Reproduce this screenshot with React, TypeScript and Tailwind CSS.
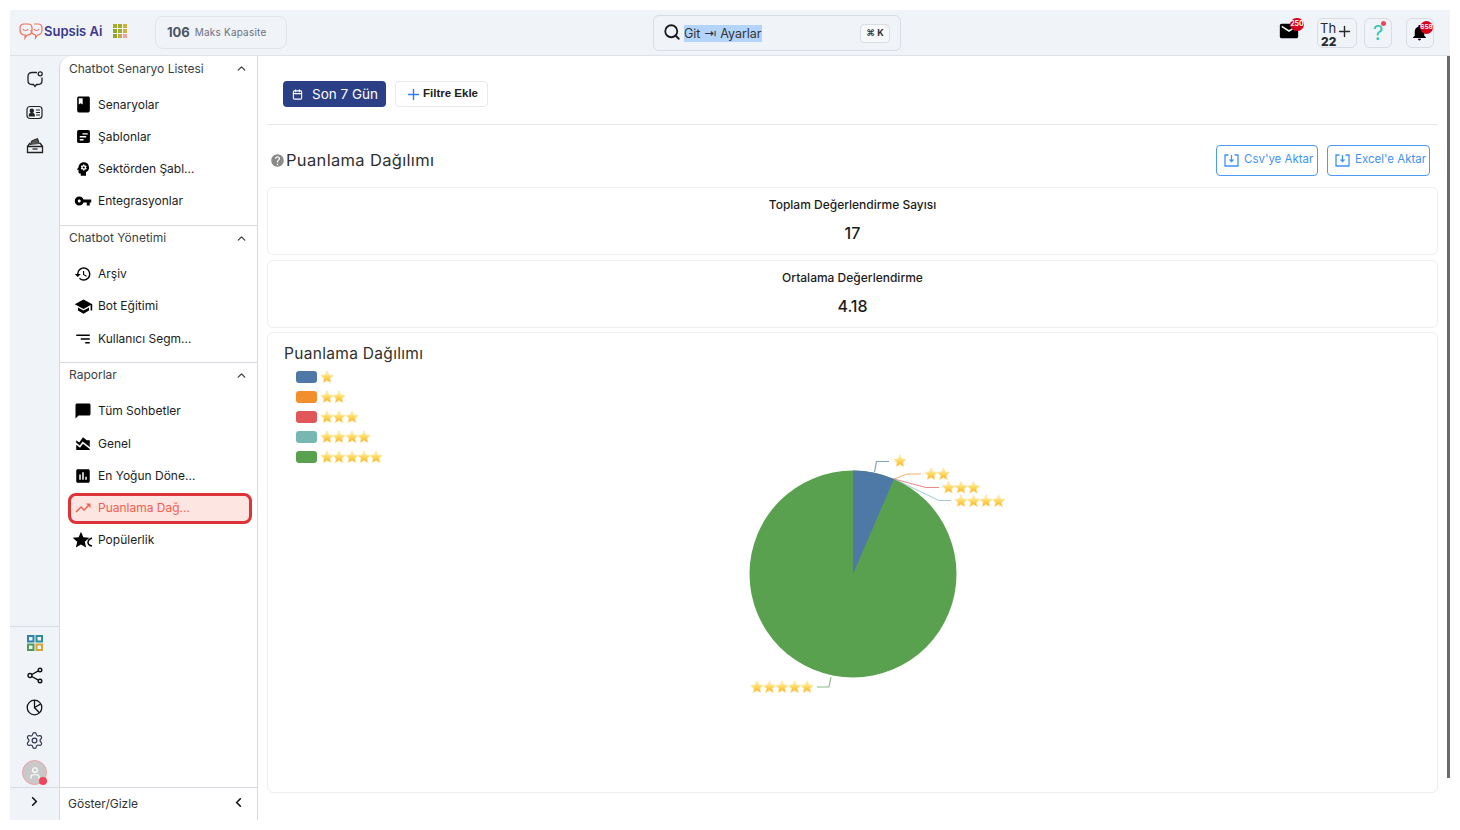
import type { ReactNode } from 'react';
import { ChevronUp, ChevronLeft, ChevronRight, Plus, Search, Settings, User, Calendar } from 'lucide-react';
import {
  MdBook,
  MdPsychology,
  MdVpnKey,
  MdHistory,
  MdSchool,
  MdSort,
  MdChatBubble,
  MdAreaChart,
  MdAssessment,
  MdTrendingUp,
  MdStar,
  MdEmail,
  MdNotifications,
  MdHelp,
} from 'react-icons/md';

const FONT = { fontFamily: 'Inter, "Noto Sans", sans-serif' };
const STAR_PATH = 'M12 1.500l3.200 6.900 7.400.9-5.500 5.100 1.500 7.400L12 18.100l-6.600 3.700 1.500-7.400L1.400 9.300l7.400-.9z';

function TemplateIcon() {
  return (
    <svg width="15" height="15" viewBox="0 0 14 14">
      <rect x="1" y="1" width="12" height="12" rx="1.500" fill="#000" />
      <path d="M6 4.500h5M3.500 7.200h6M3.500 10h3.500" stroke="#fff" strokeWidth="1.300" />
    </svg>
  );
}

function PopularIcon() {
  return (
    <span className="relative flex h-[18px] w-[18px] items-center justify-center">
      <MdStar size={20} className="-ml-1" />
      <svg className="absolute right-[-1px] bottom-[2px]" width="6" height="10" viewBox="0 0 6 10">
        <path d="M5 1C2 2 1 4 1 5.500S2 8.500 5 9" fill="none" stroke="#000" strokeWidth="1.500" />
      </svg>
    </span>
  );
}

function ChatDotIcon() {
  return (
    <svg width="18" height="18" viewBox="0 0 18 18" fill="none" stroke="#222" strokeWidth="1.300">
      <path d="M11 2.500H6C3.500 2.500 2 4 2 6.500v4C2 13 3.500 14.500 6 14.500h1.500L9 16.500l1.500-2H12c2.500 0 4-1.500 4-4V7.500" />
      <circle cx="14.200" cy="3.800" r="2" />
    </svg>
  );
}

function IdCardIcon() {
  return (
    <svg width="17" height="15" viewBox="0 0 17 15" fill="none" stroke="#222" strokeWidth="1.200">
      <rect x="1" y="1.500" width="15" height="12" rx="3" />
      <circle cx="5.800" cy="5.800" r="1.600" fill="#222" />
      <path d="M3.300 11c0-2 1-3 2.500-3s2.500 1 2.500 3z" fill="#222" />
      <path d="M10 5h4M10 7.500h4M10 10h4" />
    </svg>
  );
}

function InboxIcon() {
  return (
    <svg width="18" height="17" viewBox="0 0 18 17" fill="none" stroke="#222" strokeWidth="1.300">
      <path d="M1.500 9.500h15v6h-15zM1.500 9.500L4 6M16.500 9.500L14 6" />
      <path d="M6.500 12h5" />
      <path d="M4.500 8l1-4 6-2.500 2 5.500" fill="#555" strokeWidth="1" />
    </svg>
  );
}

function GridIcon() {
  return (
    <svg width="16" height="16" viewBox="0 0 16 16" fill="none" strokeWidth="2">
      <rect x="1" y="1" width="5.500" height="5.500" stroke="#2f7fb0" />
      <rect x="9.500" y="1" width="5.500" height="5.500" stroke="#2f8f96" />
      <rect x="1" y="9.500" width="5.500" height="5.500" stroke="#4f9a55" />
      <rect x="9.500" y="9.500" width="5.500" height="5.500" stroke="#d2a63a" />
    </svg>
  );
}

function ShareIcon() {
  return (
    <svg width="16" height="17" viewBox="0 0 16 17" fill="none" stroke="#111" strokeWidth="1.400">
      <circle cx="3" cy="8.500" r="2" />
      <circle cx="13" cy="3" r="1.800" />
      <circle cx="13" cy="14" r="1.800" />
      <path d="M4.800 7.500l6.600-3.600M4.800 9.500l6.600 3.600" />
    </svg>
  );
}

function ClockPieIcon() {
  return (
    <svg width="17" height="17" viewBox="0 0 17 17" fill="none" stroke="#111" strokeWidth="1.300">
      <circle cx="8.500" cy="8.500" r="7.300" />
      <path d="M8.500 1.200v7.300l6-3.400M8.500 8.500l4.800 5.300" />
    </svg>
  );
}

function NavItem({ icon, label, active }: { icon: ReactNode; label: string; active?: boolean }) {
  if (active) {
    return (
      <div className="flex h-[32.25px] items-center">
        <div className="mr-[5px] ml-[8px] flex h-[31px] flex-1 items-center rounded-lg border-[3px] border-[#dd3237] bg-[#fde5e2] pl-[2px] text-[#f1604f]">
          <span className="flex w-[20px] justify-center">{icon}</span>
          <span className="ml-[5px] text-[12px]">{label}</span>
        </div>
      </div>
    );
  }
  return (
    <div className="flex h-[32.25px] items-center pl-[13px] text-[#1c1c1c]">
      <span className="flex w-[20px] justify-center text-black">{icon}</span>
      <span className="ml-[5px] text-[12px]">{label}</span>
    </div>
  );
}

function Section({ title, last, children }: { title: string; last?: boolean; children: ReactNode }) {
  return (
    <div className={last ? '' : 'border-b border-[#d5dae0]'}>
      <div className="flex h-[25px] items-center justify-between pr-[9px] pl-[9px] text-[12px] text-[#3a3f45]">
        {title}
        <ChevronUp size={13} strokeWidth={2.400} />
      </div>
      <div className={last ? 'pt-[7.500px]' : 'pt-[7.500px] pb-[7px]'}>{children}</div>
    </div>
  );
}

function Star() {
  return (
    <svg width="14" height="14" viewBox="0 0 24 24" className="-mr-[1.700px] shrink-0">
      <path d={STAR_PATH} fill="url(#starFill)" stroke="#fbe7a6" strokeWidth="1.500" strokeLinejoin="round" />
    </svg>
  );
}

function Stars({ count }: { count: number }) {
  return (
    <span className="flex">
      {Array.from({ length: count }).map((_, i) => (
        <Star key={i} />
      ))}
    </span>
  );
}

function StatCard({ label, value }: { label: string; value: string }) {
  return (
    <div className="flex h-[68px] flex-col items-center rounded-md border border-[#eceef1] pt-[8px] text-[#1c1c1c]">
      <div className="text-[12px] font-medium">{label}</div>
      <div className="mt-[7px] text-[16px] font-medium">{value}</div>
    </div>
  );
}

function ExportButton({ label, width }: { label: string; width: string }) {
  return (
    <div className={`flex h-[31px] items-center gap-[5px] rounded border border-[#4a9bf5] pl-[7px] text-[11.500px] whitespace-nowrap text-[#3f93f3] ${width}`}>
      <svg width="15" height="13" viewBox="0 0 15 13" fill="none" stroke="#3f93f3" strokeWidth="1.300">
        <path d="M4.500 1H1v11h13V1h-3.500" />
        <path d="M7.500 1v6.500M5.500 5.500l2 2 2-2" />
      </svg>
      {label}
    </div>
  );
}

const legend = [
  { color: '#4e79a7', count: 1 },
  { color: '#f28e2b', count: 2 },
  { color: '#e15759', count: 3 },
  { color: '#76b7b2', count: 4 },
  { color: '#59a14f', count: 5 },
];

function PieChart() {
  // chart is placed over the card, coordinates are relative to the page
  const star = (x: number, y: number) => (
    <path
      key={`${x}-${y}`}
      transform={`translate(${x - 7} ${y - 7}) scale(0.583)`}
      d={STAR_PATH}
      fill="url(#starFill)"
      stroke="#fbe7a6"
      strokeWidth="1.500"
      strokeLinejoin="round"
    />
  );
  const row = (x: number, y: number, n: number) => Array.from({ length: n }).map((_, i) => star(x + i * 12.500, y));
  return (
    <svg className="absolute top-[-333px] left-[-268px]" width="1460" height="830" viewBox="0 0 1460 830">
      <circle cx="853" cy="574" r="103.500" fill="#59a14f" />
      <path d="M853 574V470.500A103.500 103.500 0 0 1 894 479Z" fill="#4e79a7" />
      <path d="M874.500 472L876.500 461.500H889" fill="none" stroke="#4e79a7" strokeOpacity=".7" strokeWidth="1.200" />
      <path d="M894 479L907 474H921" fill="none" stroke="#f28e2b" strokeOpacity=".7" strokeWidth="1" />
      <path d="M894 479L926 487.500H939" fill="none" stroke="#e15759" strokeOpacity=".7" strokeWidth="1" />
      <path d="M894 479L939 500.500H951" fill="none" stroke="#76b7b2" strokeOpacity=".7" strokeWidth="1" />
      <path d="M831 677L829 687H817" fill="none" stroke="#59a14f" strokeOpacity=".7" strokeWidth="1.200" />
      {row(900, 461, 1)}
      {row(931, 474, 2)}
      {row(948.500, 487.500, 3)}
      {row(961, 501, 4)}
      {row(757, 687, 5)}
    </svg>
  );
}

export default function App() {
  return (
    <div className="h-[830px] w-[1460px] overflow-hidden bg-white p-[10px]" style={FONT}>
      <svg width="0" height="0" className="absolute">
        <defs>
          <linearGradient id="starFill" x1="0" y1="0" x2="0" y2="1">
            <stop offset="0" stopColor="#fff6c4" />
            <stop offset="0.5" stopColor="#ffd95e" />
            <stop offset="1" stopColor="#f7a81c" />
          </linearGradient>
        </defs>
      </svg>
      <div className="flex h-[810px] w-[1440px] flex-col bg-[#f0f3f7]">
        {/* Header */}
        <header className="relative flex h-[46px] shrink-0 items-center border-b border-[#dfe3e8]">
          <svg className="-mt-[1px] ml-[9px]" width="24" height="18" viewBox="0 0 24 18" fill="none" stroke="#f0705f" strokeWidth="1.200">
            <path d="M5 1h4c2.500 0 4 1.500 4 4v2c0 3-2 5-5 5l-2 3 .2-3C3 12 1 10 1 7V5c0-2.500 1.500-4 4-4z" />
            <path d="M15 1h4c2.500 0 4 1.500 4 4v2c0 3-2 5-4.500 5l-2 3V12C13 11 12 9 12 7" />
            <path d="M4 6c1 2 4 2 5 0M15 6c1 2 4 2 5 0" />
          </svg>
          <span className="-mt-[1px] ml-[1px] text-[13px] font-semibold text-[#39378f]">Supsis Ai</span>
          <div className="-mt-[3px] ml-[11px] grid grid-cols-3 gap-[1.500px]">
            {['#a3ad2a', '#a3ad2a', '#c6b53a', '#8eaa2e', '#a3ad2a', '#d0b13e', '#8eaa2e', '#c9a94c', '#f0a59c'].map((c, i) => (
              <span key={i} className="h-[3.500px] w-[3.500px]" style={{ backgroundColor: c }} />
            ))}
          </div>
          <div className="ml-[28px] flex h-[33px] w-[132px] items-center rounded-lg border border-[#e0e4e9] pl-[11px] text-[#4b5563]">
            <span className="text-[13px] font-bold">106</span>
            <span className="ml-[5px] text-[10px] tracking-[0.02em] text-[#6b7280]">Maks Kapasite</span>
          </div>
          <div className="absolute top-[5px] left-[643px] flex h-[36px] w-[248px] items-center rounded-md border border-[#d9dee4] pl-[9px]">
            <Search size={18} strokeWidth={2.400} className="-mt-[2px] text-[#1c1c1c]" />
            <span className="ml-[3px] bg-[#b3d4fc] text-[12.500px] leading-[17px] text-[#333]">Git ⇥ Ayarlar</span>
            <span className="absolute right-[10px] flex h-[19px] w-[30px] items-center justify-center rounded border border-[#d9dee4] bg-[#f7f8fa] text-[9px] font-bold text-[#333]">⌘ K</span>
          </div>
          <div className="absolute top-[9px] left-[1270px] text-black">
            <span className="relative block h-[24px] w-[20px]">
              <MdEmail size={22} className="absolute top-[1px] -left-[2px]" />
              <span className="absolute -top-[1px] left-[10px] flex h-[13px] w-[14px] items-center justify-center rounded-full bg-[#d6001c] text-[7px] font-bold text-white">250</span>
            </span>
          </div>
          <div className="absolute top-[8px] left-[1307px] h-[30px] w-[40px] rounded-md border border-[#d9dde3] text-[#2a2a2a]">
            <span className="absolute top-[3px] left-[2px] text-[13px] leading-[13px]">Th</span>
            <span className="absolute top-[17px] left-[3px] text-[12px] leading-[12px] font-extrabold">22</span>
            <Plus size={17} className="absolute top-[4px] left-[18px]" />
          </div>
          <div className="absolute top-[8px] left-[1354px] flex h-[30px] w-[28px] items-center justify-center rounded-md border border-[#d9dde3] text-[20px] leading-none text-[#2ec4b6]">
            ?
            <span className="absolute top-[2px] left-[16px] h-[5px] w-[5px] rounded-full bg-[#f0455a]" />
          </div>
          <div className="absolute top-[8px] left-[1396px] h-[30px] w-[28px] rounded-md border border-[#d9dde3]">
            <MdNotifications size={19} className="absolute top-[4px] left-[3px] text-black" />
            <span className="absolute top-[2px] left-[13px] flex h-[13px] w-[13px] items-center justify-center rounded-full bg-[#d6001c] text-[6.500px] font-bold text-white">658</span>
          </div>
        </header>

        <div className="flex min-h-0 flex-1">
          {/* Icon rail */}
          <aside className="flex w-[49px] shrink-0 flex-col items-center">
            <div className="flex h-[570px] flex-col items-center gap-[17px] pt-[14px]">
              <ChatDotIcon />
              <IdCardIcon />
              <InboxIcon />
            </div>
            <div className="flex w-full flex-1 flex-col items-center border-t border-[#d9dde3] pt-[8px]">
              <GridIcon />
              <span className="mt-[16px]"><ShareIcon /></span>
              <span className="mt-[15px]"><ClockPieIcon /></span>
              <Settings size={19} strokeWidth={1.500} className="mt-[15px] text-[#2d3550]" />
              <span className="relative mt-[10px] flex h-[25px] w-[25px] items-center justify-center rounded-full border border-[#f0a0a8] bg-[#c9c9c9]">
                <User size={14} className="text-white" />
                <span className="absolute -right-[1px] -bottom-[1px] h-[8px] w-[8px] rounded-full bg-[#f0455a]" />
              </span>
            </div>
            <div className="flex h-[33px] w-full items-center justify-center border-t border-[#d9dde3]">
              <ChevronRight size={15} strokeWidth={2.600} className="-mt-[5px] text-[#111]" />
            </div>
          </aside>

          {/* Secondary sidebar */}
          <aside className="flex w-[199px] shrink-0 flex-col rounded-tl-xl border-r border-l border-[#d5dae0] bg-white">
            <div className="flex-1">
              <Section title="Chatbot Senaryo Listesi">
                <NavItem icon={<MdBook size={19} />} label="Senaryolar" />
                <NavItem icon={<TemplateIcon />} label="Şablonlar" />
                <NavItem icon={<MdPsychology size={18} />} label="Sektörden Şabl…" />
                <NavItem icon={<MdVpnKey size={18} />} label="Entegrasyonlar" />
              </Section>
              <Section title="Chatbot Yönetimi">
                <NavItem icon={<MdHistory size={18} />} label="Arşiv" />
                <NavItem icon={<MdSchool size={19} />} label="Bot Eğitimi" />
                <NavItem icon={<MdSort size={18} className="-scale-x-100" />} label="Kullanıcı Segm…" />
              </Section>
              <Section title="Raporlar" last>
                <NavItem icon={<MdChatBubble size={18} />} label="Tüm Sohbetler" />
                <NavItem icon={<MdAreaChart size={18} />} label="Genel" />
                <NavItem icon={<MdAssessment size={18} />} label="En Yoğun Döne…" />
                <NavItem active icon={<MdTrendingUp size={18} />} label="Puanlama Dağ…" />
                <NavItem icon={<PopularIcon />} label="Popülerlik" />
              </Section>
            </div>
            <div className="flex h-[33px] items-center justify-between border-t border-[#d5dae0] pr-[11px] pl-[8px] text-[12px] text-[#333]">
              Göster/Gizle
              <ChevronLeft size={15} strokeWidth={2.600} className="-mt-[4px] text-[#111]" />
            </div>
          </aside>

          {/* Main */}
          <main className="relative min-w-0 flex-1 bg-white pt-[25px] pr-[12px] pl-[9px]">
            <div className="flex h-[44px] items-start gap-[9px] border-b border-[#e3e6ea] pl-[16px]">
              <div className="flex h-[26px] w-[103px] items-center rounded bg-[#2b3f87] pl-[9px] text-[13.500px] text-white">
                <Calendar size={11} strokeWidth={2.400} />
                <span className="ml-[9px]">Son 7 Gün</span>
              </div>
              <div className="flex h-[26px] w-[93px] items-center rounded border border-[#e6e9ee] pl-[9px] text-[11.500px] font-bold text-[#222]">
                <Plus size={17} strokeWidth={2} className="text-[#2f7fe8]" />
                <span className="ml-[1px]" style={{ fontFamily: '"Liberation Sans", sans-serif' }}>Filtre Ekle</span>
              </div>
            </div>
            <div className="flex h-[62px] items-center pt-[8px] pl-[3px]">
              <MdHelp size={15} className="text-[#8a8a8a]" />
              <h1 className="ml-[1px] text-[16.500px] tracking-[0.02em] text-[#2f2f2f]">Puanlama Dağılımı</h1>
              <div className="mr-[8px] ml-auto flex gap-[9px]">
                <ExportButton label="Csv'ye Aktar" width="w-[102px]" />
                <ExportButton label="Excel'e Aktar" width="w-[103px]" />
              </div>
            </div>
            <div className="flex flex-col gap-[5px]">
              <StatCard label="Toplam Değerlendirme Sayısı" value="17" />
              <StatCard label="Ortalama Değerlendirme" value="4.18" />
              <div className="relative -mt-[1px] h-[461px] rounded-md border border-[#eceef1] pt-[9px] pl-[16px]">
                <div className="text-[15.500px] tracking-[0.02em] text-[#2f2f2f]">Puanlama Dağılımı</div>
                <div className="mt-[5px] flex flex-col gap-[7px] pl-[12px]">
                  {legend.map((l) => (
                    <div key={l.count} className="flex h-[13px] items-center gap-[3px]">
                      <span className="h-[12px] w-[21px] rounded-[3px]" style={{ backgroundColor: l.color }} />
                      <Stars count={l.count} />
                    </div>
                  ))}
                </div>
                <PieChart />
              </div>
            </div>
            {/* scrollbar */}
            <div className="absolute top-0 right-0 bottom-[42px] w-[3px] bg-[#6b6b6b]" />
          </main>
        </div>
      </div>
    </div>
  );
}
